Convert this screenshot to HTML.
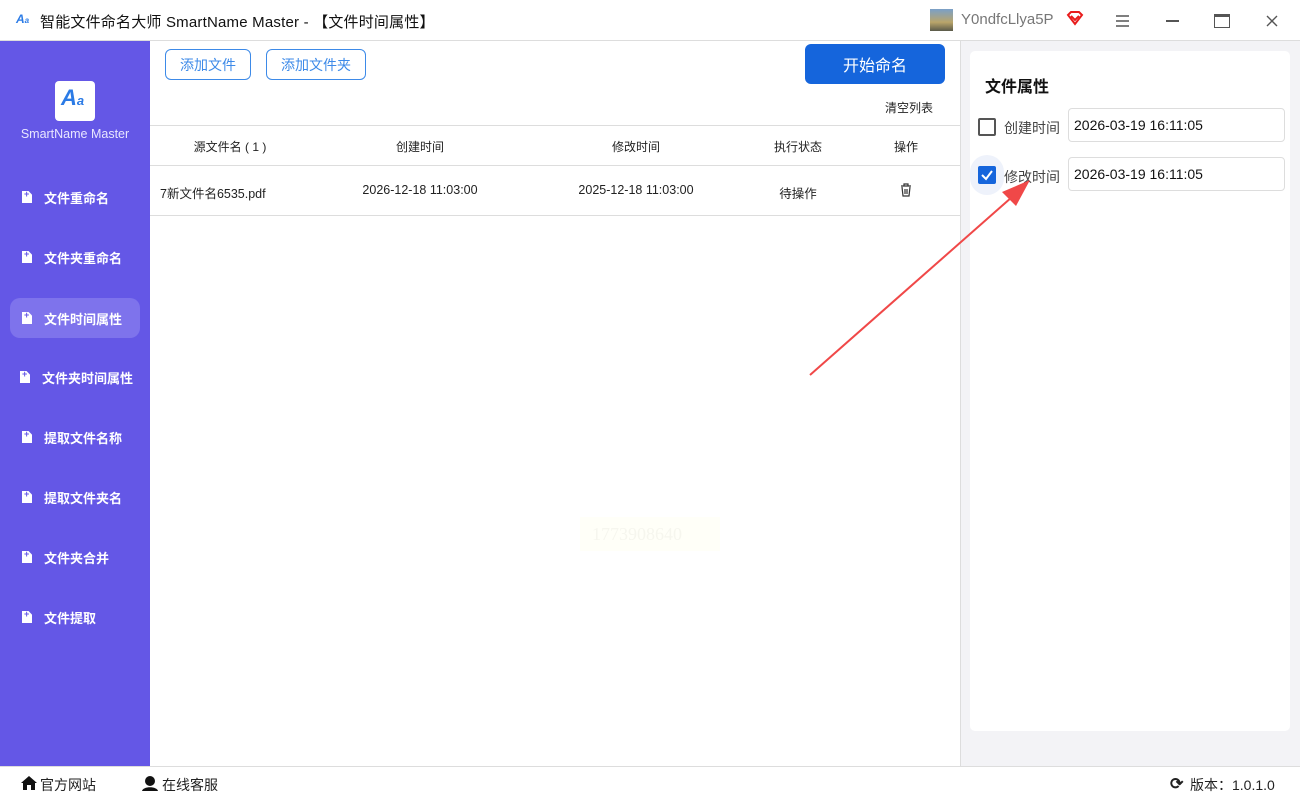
<!DOCTYPE html>
<html><head><meta charset="utf-8"><style>
*{margin:0;padding:0;box-sizing:border-box}
body{width:1300px;height:800px;overflow:hidden;background:#fff;font-family:"Liberation Sans","Noto Sans CJK SC",sans-serif;position:relative;color:#222}
.abs{position:absolute}
.title{left:0;top:0;width:1300px;height:41px;border-bottom:1px solid #ddd;background:#fff}
.side{left:0;top:41px;width:150px;height:725px;background:#6457e6;color:#fff}
.nav{position:absolute;left:10px;width:130px;height:40px;border-radius:10px;font-size:13px;font-weight:bold;display:flex;align-items:center;padding-left:12px}
.nav .ic{width:10px;height:12px;background:#fff;margin-right:12px;position:relative;clip-path:polygon(0 0,65% 0,100% 30%,100% 100%,0 100%)}
.nav .ic:after{content:"+";position:absolute;left:2px;top:-2px;font-size:9px;color:#6457e6}
.btn{border:1px solid #3d8ae8;border-radius:6px;color:#3d8ae8;font-size:14px;display:flex;align-items:center;justify-content:center;height:31px;top:49px}
.th{top:138px;font-size:12px;text-align:center}
.td{top:183px;font-size:12.5px;text-align:center}
.hl{height:1px;background:#ddd;left:150px;width:810px}
.foot{left:0;top:766px;width:1300px;height:34px;border-top:1px solid #ddd;font-size:14px}
.inp{left:1068px;width:217px;height:34px;border:1px solid #ddd;border-radius:4px;font-size:14px;padding:8px 0 0 5px;color:#111}
</style></head><body>
<div class="abs title">
 <div class="abs" style="left:16px;top:12px;width:18px;height:18px;background:#fff;color:#2b7be6;font-size:12px;font-style:italic;font-weight:bold">A<span style="font-size:8px">a</span></div>
 <div class="abs" style="left:40px;top:11px;font-size:15px;color:#111;letter-spacing:0.2px">智能文件命名大师 SmartName Master - 【文件时间属性】</div>
 <div class="abs" style="left:930px;top:9px;width:23px;height:22px;background:linear-gradient(#7aa0c8,#b9a56a 60%,#5a5a4a)"></div>
 <div class="abs" style="left:961px;top:11px;font-size:15px;color:#777">Y0ndfcLlya5P</div>
 <svg class="abs" style="left:1066px;top:10px" width="18" height="16" viewBox="0 0 18 16"><path d="M2 5 L5 2 H13 L16 5 L9 14 Z" fill="none" stroke="#e81c1c" stroke-width="2"/><path d="M5 6 L9 10 L13 6" fill="none" stroke="#e81c1c" stroke-width="2"/></svg>
 <svg class="abs" style="left:1116px;top:15px" width="14" height="12"><path d="M0 1H13M0 6H13M0 11H13" stroke="#555" stroke-width="1.6"/></svg>
 <div class="abs" style="left:1166px;top:20px;width:13px;height:1.5px;background:#555"></div>
 <div class="abs" style="left:1214px;top:14px;width:16px;height:14px;border:1.5px solid #555;border-top-width:3px"></div>
 <svg class="abs" style="left:1266px;top:15px" width="12" height="12"><path d="M1 1L11 11M11 1L1 11" stroke="#555" stroke-width="1.4"/></svg>
</div>
<div class="abs side">
 <div class="abs" style="left:55px;top:40px;width:40px;height:40px;background:#fff;border-radius:4px;color:#2b7be6;font-weight:bold;font-style:italic;font-size:22px;padding:4px 0 0 6px">A<span style="font-size:13px">a</span></div>
 <div class="abs" style="left:0;width:150px;top:86px;text-align:center;font-size:12.5px;color:#e8e6ff">SmartName Master</div>
 <div class="nav" style="top:136px"><span class="ic"></span>文件重命名</div>
 <div class="nav" style="top:196px"><span class="ic"></span>文件夹重命名</div>
 <div class="nav" style="top:257px;background:#7e73ec"><span class="ic"></span>文件时间属性</div>
 <div class="nav" style="top:316px;padding-left:10px"><span class="ic"></span>文件夹时间属性</div>
 <div class="nav" style="top:376px"><span class="ic"></span>提取文件名称</div>
 <div class="nav" style="top:436px"><span class="ic"></span>提取文件夹名</div>
 <div class="nav" style="top:496px"><span class="ic"></span>文件夹合并</div>
 <div class="nav" style="top:556px"><span class="ic"></span>文件提取</div>
</div>
<div class="abs btn" style="left:165px;width:86px">添加文件</div>
<div class="abs btn" style="left:266px;width:100px">添加文件夹</div>
<div class="abs" style="left:805px;top:44px;width:140px;height:40px;background:#1565dc;border-radius:6px;color:#fff;font-size:16px;display:flex;align-items:center;justify-content:center">开始命名</div>
<div class="abs" style="left:885px;top:99px;font-size:12px">清空列表</div>
<div class="abs hl" style="top:125px"></div>
<div class="abs hl" style="top:165px"></div>
<div class="abs hl" style="top:215px"></div>
<div class="abs th" style="left:150px;width:160px">源文件名 ( 1 )</div>
<div class="abs th" style="left:340px;width:160px">创建时间</div>
<div class="abs th" style="left:556px;width:160px">修改时间</div>
<div class="abs th" style="left:748px;width:100px">执行状态</div>
<div class="abs th" style="left:876px;width:60px">操作</div>
<div class="abs td" style="left:160px;text-align:left">7新文件名6535.pdf</div>
<div class="abs td" style="left:340px;width:160px">2026-12-18 11:03:00</div>
<div class="abs td" style="left:556px;width:160px">2025-12-18 11:03:00</div>
<div class="abs td" style="left:748px;width:100px">待操作</div>
<svg class="abs" style="left:900px;top:183px" width="12" height="14"><path d="M1 3H11M4 3V1H8V3M2 4L3 13H9L10 4M5 6V11M7 6V11" fill="none" stroke="#333" stroke-width="1.2"/></svg>
<div class="abs" style="left:580px;top:517px;width:140px;height:34px;background:#fffff8;color:#f6f6ee;font-family:'Liberation Serif',serif;font-size:18px;padding:7px 0 0 12px">1773908640</div>
<div class="abs" style="left:960px;top:41px;width:340px;height:725px;background:#f3f3f6;border-left:1px solid #ddd"></div>
<div class="abs" style="left:970px;top:51px;width:320px;height:680px;background:#fff;border-radius:5px"></div>
<div class="abs" style="left:985px;top:73px;font-size:16px;font-weight:bold;color:#111">文件属性</div>
<div class="abs" style="left:978px;top:118px;width:18px;height:18px;border:2px solid #555;border-radius:2px;background:#fff"></div>
<div class="abs" style="left:1004px;top:118px;font-size:14px;color:#444">创建时间</div>
<div class="abs inp" style="top:108px">2026-03-19 16:11:05</div>
<div class="abs" style="left:970px;top:155px;width:34px;height:40px;border-radius:17px;background:#eef2fb"></div>
<div class="abs" style="left:978px;top:166px;width:18px;height:18px;border-radius:2px;background:#1565dc"><svg width="18" height="18"><path d="M4 9L8 13L14 5" fill="none" stroke="#fff" stroke-width="2"/></svg></div>
<div class="abs" style="left:1004px;top:167px;font-size:14px;color:#444">修改时间</div>
<div class="abs inp" style="top:157px">2026-03-19 16:11:05</div>
<svg class="abs" style="left:0;top:0" width="1300" height="800"><line x1="810" y1="375" x2="1012" y2="197" stroke="#f04848" stroke-width="2"/><path d="M1030 180 L1002 192 L1016 206 Z" fill="#f04848"/></svg>
<div class="abs foot">
 <svg class="abs" style="left:20px;top:8px" width="18" height="16"><path d="M9 1L1 8H3V15H7V10H11V15H15V8H17Z" fill="#111"/></svg>
 <div class="abs" style="left:40px;top:8px">官方网站</div>
 <svg class="abs" style="left:141px;top:7px" width="18" height="18"><circle cx="9" cy="7" r="5" fill="#111"/><path d="M1 17C2 12 16 12 17 17Z" fill="#111"/></svg>
 <div class="abs" style="left:162px;top:8px">在线客服</div>
 <div class="abs" style="left:1170px;top:7px;font-size:16px;font-weight:bold">⟳</div>
 <div class="abs" style="left:1190px;top:8px">版本：1.0.1.0</div>
</div>
</body></html>
